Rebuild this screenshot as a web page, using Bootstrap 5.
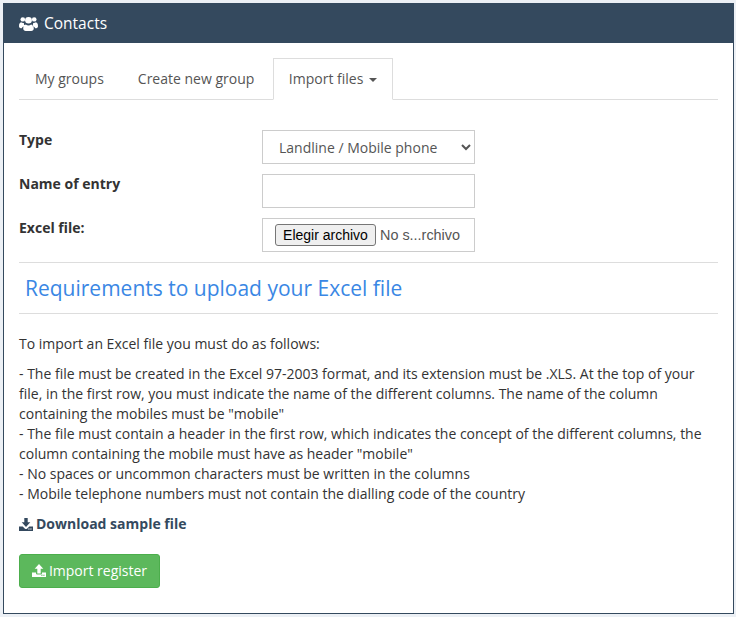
<!DOCTYPE html>
<html lang="en">
<head>
    <meta charset="UTF-8">
    <meta name="viewport" content="width=device-width, initial-scale=1.0">
    <title>Contacts</title>
    <link href="https://cdn.jsdelivr.net/npm/bootstrap@5.3.0/dist/css/bootstrap.min.css" rel="stylesheet">
    <style>
        body { background: #ecf0f5; font-family: "Open Sans", sans-serif; font-size: 14px; line-height: 20px; color: #333; padding: 3px 2px 3px 3px; }
        .box { background: #fff; border: 1px solid #34495e; border-radius: 0; }
        .box-head { background: #34495e; color: #fff; height: 39px; padding-left: 15px; padding-bottom: 2px; font-size: 15.5px; }
        .box-head svg { width: 19px; height: 16px; margin-right: 6px; margin-top: 2px; }
        .box-body { padding: 15px 15px 25px; }
        .tabs { border-bottom: 1px solid #ddd; margin-bottom: 30px; }
        .tabs .nav-link { color: #555; padding: 10px 15px; height: 42px; margin-right: 2px; border-radius: 0; font-size: 14px; }
        .tabs .nav-link.active { color: #555; border-color: #ddd #ddd #fff; margin-left: .5px; }
        .tabs .dropdown-toggle::after { margin-left: 6px; vertical-align: 2px; border-top-width: 4px; border-left-width: 4px; border-right-width: 4px; }
        .entry-row { --bs-gutter-x: 30px; margin-bottom: 10px; }
        .entry-label { font-weight: 700; }
        .entry-input { height: 34px; border: 1px solid #ccc; border-radius: 0; color: #555; font-size: 14px; padding: 6px 12px; line-height: 20px; }
        select.entry-input { appearance: auto; padding-left: 12px; }
        .file-box { display: flex; align-items: center; padding: 0 12px; font-family: "Liberation Sans", sans-serif; overflow: hidden; white-space: nowrap; }
        .file-name { font-size: 14.4px; color: #555; }
        .file-btn { height: 22px; width: 101px; flex: none; margin-right: 4px; padding: 0; font: 14px "Liberation Sans", sans-serif; color: #000; background: #efefef; border: 1px solid #767676; border-radius: 3px; }
        .rule { margin: 0; border-top: 1px solid #ddd; opacity: 1; }
        .req-title { font-size: 21px; line-height: 30px; font-weight: 400; color: #3a87e4; margin: 10px 0 10px; padding-left: 6px; }
        .req-text { margin: 20px 0 10px; }
        .req-list { margin: 0 0 10px; }
        .sample-link { display: flex; align-items: center; gap: 3px; font-weight: 700; color: #34495e; text-decoration: none; margin-bottom: 20px; }
        .sample-link svg { width: 14px; height: 13px; }
        .import-btn { display: flex; align-items: center; justify-content: center; gap: 3px; background: #5cb85c; border: 1px solid #4cae4c; color: #fff; font-size: 14px; height: 34px; width: 141px; padding: 0 0 2px; border-radius: 3px; }
        .import-btn svg { width: 14px; height: 13px; }
    </style>
</head>
<body>
<div class="box">
    <div class="box-head d-flex align-items-center">
        <svg viewBox="0 0 18 16" fill="#fff" preserveAspectRatio="none"><circle cx="3.6" cy="3.4" r="2.2"/><circle cx="14.400" cy="3.4" r="2.2"/><circle cx="9" cy="4.2" r="3.2"/><path d="M0 10.2C0 7.800.7 6.600 2 6.300c.7.600 1.500.900 2.600.800-.100 1.100.300 2.100 1 3-1.500.300-2.500 1.100-3 2.200C1 12.300 0 11.700 0 10.200zM18 10.200c0-2.400-.7-3.600-2-3.900-.7.600-1.500.900-2.600.800.100 1.100-.300 2.100-1 3 1.500.300 2.500 1.100 3 2.200 1.600 0 2.600-.600 2.600-2.100zM4 12.500c0-2.200 1-3.700 2.500-3.900.7.600 1.500.900 2.500.900s1.800-.300 2.500-.900c1.500.200 2.500 1.700 2.500 3.900 0 1.500-1 2.500-2.400 2.500H6.400C5 15 4 14 4 12.500z"/></svg>
        <span>Contacts</span>
    </div>
    <div class="box-body">
        <ul class="nav nav-tabs tabs">
            <li class="nav-item"><a class="nav-link" href="#">My groups</a></li>
            <li class="nav-item"><a class="nav-link" href="#">Create new group</a></li>
            <li class="nav-item"><a class="nav-link active dropdown-toggle" href="#">Import files</a></li>
        </ul>

        <form>
            <div class="row entry-row">
                <label class="col-4 entry-label" for="entryType">Type</label>
                <div class="col-4">
                    <select id="entryType" class="form-control entry-input">
                        <option>Landline / Mobile phone</option>
                    </select>
                </div>
            </div>
            <div class="row entry-row">
                <label class="col-4 entry-label" for="entryName">Name of entry</label>
                <div class="col-4"><input id="entryName" type="text" class="form-control entry-input"></div>
            </div>
            <div class="row entry-row">
                <label class="col-4 entry-label">Excel file:</label>
                <div class="col-4">
                    <div class="form-control entry-input file-box">
                        <button type="button" class="file-btn">Elegir archivo</button>
                        <span class="file-name">No s...rchivo</span>
                    </div>
                </div>
            </div>
        </form>

        <hr class="rule">
        <h3 class="req-title">Requirements to upload your Excel file</h3>
        <hr class="rule">

        <p class="req-text">To import an Excel file you must do as follows:</p>
        <p class="req-list">
            - The file must be created in the Excel 97-2003 format, and its extension must be .XLS. At the top of your file, in the first row, you must indicate the name of the different columns. The name of the column containing the mobiles must be "mobile"<br>
            - The file must contain a header in the first row, which indicates the concept of the different columns, the column containing the mobile must have as header "mobile"<br>
            - No spaces or uncommon characters must be written in the columns<br>
            - Mobile telephone numbers must not contain the dialling code of the country
        </p>
        <a class="sample-link" href="#">
            <svg viewBox="0 0 14 13" fill="currentColor"><path d="M5.300 0h3.400v4.300h2.600L7 9 2.700 4.300h2.600z"/><path d="M0 8.600h3.700L6 10.700c.6.500 1.400.500 2 0l2.300-2.100H14V13H0zM10.500 11a.6.6 0 1 0 0 .01zM12.500 11a.6.6 0 1 0 0 .01z"/></svg>
            Download sample file
        </a>
        <button type="button" class="btn import-btn">
            <svg viewBox="0 0 14 13" fill="currentColor"><path d="M7 0l4.300 4.700H8.700v4.800H5.300V4.700H2.700z"/><path d="M0 8.600h4v1c0 .5.400.8.800.8h4.400c.4 0 .8-.3.800-.8v-1h4V13H0zM10.500 11.200a.6.6 0 1 0 0 .01zM12.500 11.200a.6.6 0 1 0 0 .01z"/></svg>
            Import register
        </button>
    </div>
</div>
<script src="https://cdn.jsdelivr.net/npm/bootstrap@5.3.0/dist/js/bootstrap.bundle.min.js"></script>
</body>
</html>
